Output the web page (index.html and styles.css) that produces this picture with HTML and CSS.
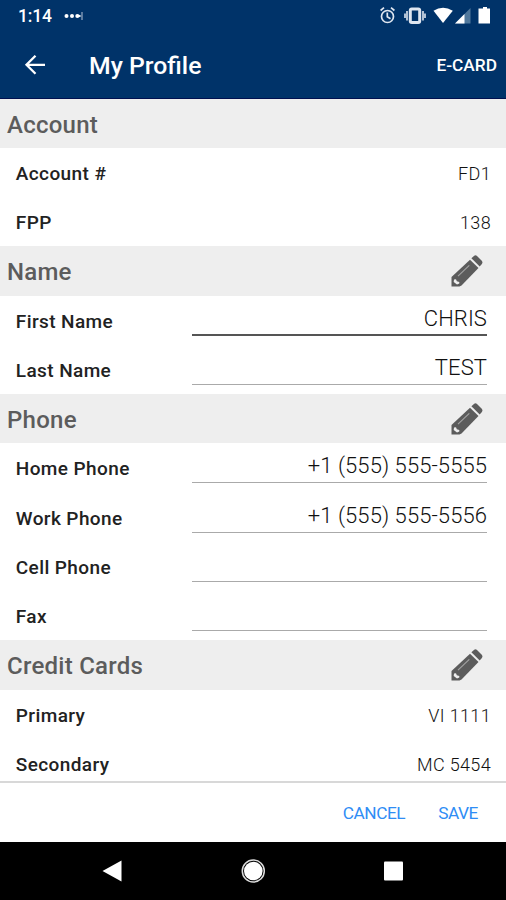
FILE: index.html
```html
<!DOCTYPE html>
<html lang="en">
<head>
<meta charset="utf-8">
<title>My Profile</title>
<link rel="stylesheet" href="styles.css">
</head>
<body>
<svg class="defs" width="0" height="0" aria-hidden="true">
  <symbol id="pencil" viewBox="0 0 34 34">
    <path fill="#5c5c5c" d="M1.500 32.500V23L20 5.700 28.500 14 11.500 31.500 9.500 32.500Z"/>
    <path fill="#5c5c5c" d="M21.400 4.300 24.200 1.800Q25.600.8 27 2L32 7Q33.100 8.400 31.900 9.900L29.700 12.400Z"/>
    <path fill="#eee" d="M4 25.500 6 25.200 6.800 27.300 9.300 27.900 9.300 29.500 7 30.600 3.700 28Z"/>
    <path fill="none" stroke="#a4a4a4" stroke-width="1.100" d="M8 22.200 19.300 11.400"/>
  </symbol>
</svg>
<div class="screen">
  <header class="top">
    <div class="status">
      <span class="time">1:14</span>
      <svg class="dots" width="20" height="10" viewBox="0 0 20 10"><g fill="#fff"><circle cx="2.500" cy="5" r="2"/><circle cx="8" cy="5" r="2"/><circle cx="13.300" cy="5" r="2"/><path d="m14.500 3.500 3 1.500-3 1.500z"/></g><path d="M18 1v8" stroke="#b4c2d6"/></svg>
      <svg class="indicators" width="116" height="20" viewBox="0 0 116 20">
        <g fill="none" stroke="#dfe6f0" stroke-width="1.700"><circle cx="8.500" cy="10.500" r="6"/><path d="M1.600 4.500 5 1.700M15.400 4.500 12 1.700M8.300 6.500v4.300l3.200 2"/></g>
        <rect x="31.300" y="3" width="9.400" height="13.500" rx="1.500" fill="none" stroke="#dfe6f0" stroke-width="3"/>
        <path d="M28 5v9.500M44 5v9.500M26 7.500v4.500M46 7.500v4.500" stroke="#dfe6f0" stroke-width="1.600"/>
        <path fill="#fff" d="M54.500 4.800Q64-1.300 73.800 4.800L64 17Z"/>
        <path fill="#50789c" d="M91.500 2V17.500H76Z"/><path fill="#fff" d="M85.500 8V17.500H76Z"/>
        <path fill="#fff" d="M101 2.500h3V1h4v1.500h3v15H99.500V2.500Z"/>
      </svg>
    </div>
    <div class="bar">
      <svg class="back" width="22" height="22" viewBox="0 0 22 22"><path d="M21 9.800H3M11.500.8 2.500 9.800l9 9" fill="none" stroke="#fff" stroke-width="2.300"/></svg>
      <h1 class="title">My Profile</h1>
      <span class="ecard">E-CARD</span>
    </div>
  </header>
  <main class="list">
    <h2 class="section">Account</h2>
    <div class="row"><span class="label">Account #</span><span class="value">FD1</span></div>
    <div class="row"><span class="label">FPP</span><span class="value">138</span></div>
    <h2 class="section">Name<svg class="edit"><use href="#pencil"/></svg></h2>
    <div class="row"><span class="label">First Name</span><span class="field active">CHRIS</span></div>
    <div class="row"><span class="label">Last Name</span><span class="field">TEST</span></div>
    <h2 class="section">Phone<svg class="edit"><use href="#pencil"/></svg></h2>
    <div class="row"><span class="label">Home Phone</span><span class="field">+1 (555) 555-5555</span></div>
    <div class="row"><span class="label">Work Phone</span><span class="field">+1 (555) 555-5556</span></div>
    <div class="row"><span class="label">Cell Phone</span><span class="field"></span></div>
    <div class="row"><span class="label">Fax</span><span class="field"></span></div>
    <h2 class="section">Credit Cards<svg class="edit"><use href="#pencil"/></svg></h2>
    <div class="row"><span class="label">Primary</span><span class="value">VI 1111</span></div>
    <div class="row"><span class="label">Secondary</span><span class="value">MC 5454</span></div>
  </main>
  <div class="actions"><span>CANCEL</span><span>SAVE</span></div>
  <nav class="nav">
    <svg width="506" height="58" viewBox="0 0 506 58"><g fill="#fff"><path d="M102.500 29 121.500 18.500V39.500Z"/><circle cx="253.300" cy="29" r="9.300"/><rect x="384" y="19.500" width="19" height="19" rx="1"/></g><circle cx="253.300" cy="29" r="11" fill="none" stroke="#ddd" stroke-width="1.500"/></svg>
  </nav>
</div>
</body>
</html>
```
FILE: styles.css
```css
* { box-sizing: border-box; }
body { margin: 0; font-family: Roboto, "Liberation Sans", sans-serif; background: #fff; }
.defs { display: block; }
.screen { width: 506px; height: 900px; display: flex; flex-direction: column; overflow: hidden; }
.top { height: 98.500px; flex: none; background: #003369; color: #fff; border-bottom: 1px solid #00104f; }
.status { height: 32px; display: flex; align-items: center; padding-left: 18px; }
.time { width: 46px; font-size: 17.500px; font-weight: 500; line-height: 32px; letter-spacing: -.2px; }
.indicators { margin-left: auto; margin-right: 11px; margin-top: -1px; }
.bar { height: 66px; display: flex; align-items: center; padding: 1px 9px 0 24px; }
.title { margin: 1px 0 0 43px; font-size: 24.800px; font-weight: 500; line-height: 30px; }
.ecard { margin: -2px 0 0 auto; font-size: 17.300px; font-weight: 500; }
.list { height: 682.500px; flex: none; overflow: hidden; }
.section { height: 49.250px; margin: 0; padding: 3px 22px 0 7px; display: flex; align-items: center; justify-content: space-between; background: #eee; color: #5c5c5c; font-size: 24px; font-weight: 500; letter-spacing: .25px; }
.edit { width: 34px; height: 34px; margin: -2px 0 0 0; }
.row { height: 49.250px; display: flex; align-items: center; justify-content: space-between; padding: 2px 15px 0 15.800px; }
.label { font-size: 19px; font-weight: 500; letter-spacing: .4px; color: #222; }
.value { font-size: 18px; font-weight: 300; letter-spacing: .35px; color: #111; }
.field { width: 295px; height: 33px; margin: -4px 4px 0 0; border-bottom: 1.500px solid #aaa; text-align: right; font-size: 22px; letter-spacing: .08px; line-height: 32px; color: #111; font-weight: 300; }
.active { border-bottom: 2px solid #555; }
.actions { height: 61px; flex: none; border-top: 2px solid #d8d8d8; display: flex; align-items: center; justify-content: flex-end; gap: 33px; padding-right: 28px; font-size: 17.300px; letter-spacing: -.45px; color: #2f8df5; }
.nav { height: 58px; flex: none; background: #000; }
.nav svg { display: block; }
```
